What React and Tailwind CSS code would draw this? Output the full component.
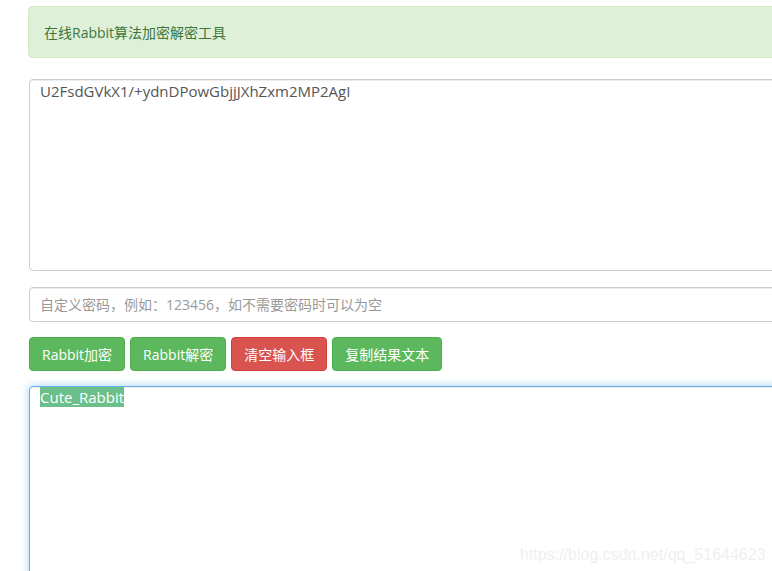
import React from "react";

const font = {
  fontFamily: '"Open Sans", "Noto Sans CJK SC", sans-serif',
};

const Btn = ({ children, red }) => (
  <button
    className={
      red
        ? "h-[34px] rounded-[4px] border border-[#d43f3a] bg-[#d9534f] px-[12px] text-[14px] text-white"
        : "h-[34px] rounded-[4px] border border-[#4cae4c] bg-[#5cb85c] px-[12px] text-[14px] text-white"
    }
  >
    {children}
  </button>
);

export default function App() {
  return (
    <div
      className="relative h-[571px] w-[772px] overflow-hidden bg-white pl-[28px] pt-[6px]"
      style={font}
    >
      {/* title */}
      <div className="flex h-[52px] w-[800px] items-center rounded-[4px] border border-[#d6e9c6] bg-[#dff0d8] px-[15px] text-[14px] text-[#3c763d]">
        在线Rabbit算法加密解密工具
      </div>

      <div className="ml-[1px] mt-[21px] h-[192px] w-[800px] rounded-[4px] border border-[#ccc] px-[10px] pt-[1px] text-[15px] leading-[20px] text-[#555] shadow-[inset_0_1px_1px_rgba(0,0,0,0.075)]">
        U2FsdGVkX1/+ydnDPowGbjjJXhZxm2MP2AgI
      </div>

      <div className="ml-[1px] mt-[16px] flex h-[35px] w-[800px] items-center rounded-[4px] border border-[#ccc] px-[10px] text-[14px] text-[#999] shadow-[inset_0_1px_1px_rgba(0,0,0,0.075)]">
        自定义密码，例如：123456，如不需要密码时可以为空
      </div>

      <div className="mt-[15px] flex gap-[5px] pl-[1px]">
        <Btn>Rabbit加密</Btn>
        <Btn>Rabbit解密</Btn>
        <Btn red>清空输入框</Btn>
        <Btn>复制结果文本</Btn>
      </div>

      <div className="ml-[1px] mt-[15px] h-[220px] w-[800px] rounded-[4px] border border-[#66afe9] px-[10px] pt-[2px] text-[15px] leading-[17px] text-[#555] shadow-[inset_0_1px_1px_rgba(0,0,0,0.075),0_0_8px_rgba(102,175,233,0.6)]">
        <span className="bg-[#6abf8a] text-white">Cute_Rabbit</span>
      </div>

      {/* watermark */}
      <div
        className="absolute left-[520px] top-[543px] text-[16px] text-[#efefef]"
        style={{ fontFamily: '"Liberation Sans", Arial, sans-serif' }}
      >
        https://blog.csdn.net/qq_51644623
      </div>
    </div>
  );
}
